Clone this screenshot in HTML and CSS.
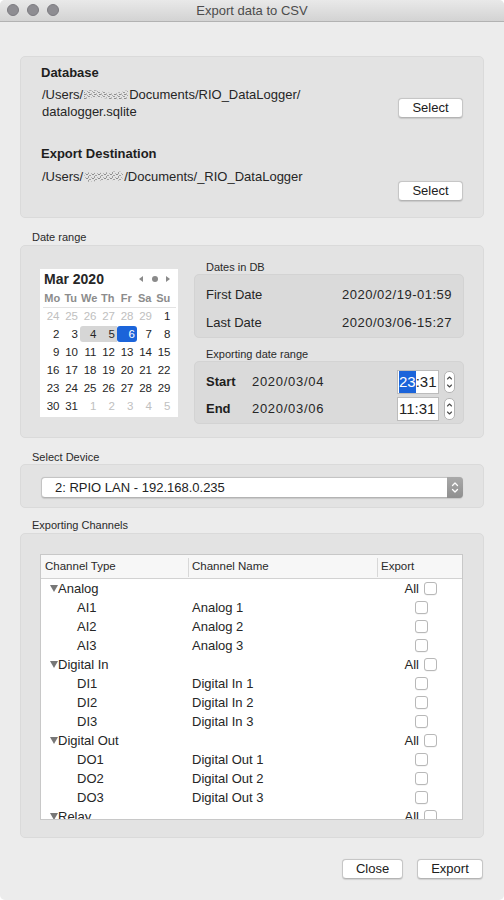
FILE: index.html
```html
<!DOCTYPE html>
<html lang="en">
<head>
<meta charset="utf-8">
<title>Export data to CSV</title>
<link rel="stylesheet" href="styles.css">
</head>
<body>
<div class="window">
  <header class="titlebar">
    <div class="lights"><span></span><span></span><span></span></div>
    <div class="title">Export data to CSV</div>
    <div class="lights-spacer"></div>
  </header>

  <main class="content">
    <section class="group db">
      <div class="field-title">Database</div>
      <div class="path-row">
        <div class="path">/Users/<svg class="mask" width="46" height="13" viewBox="0 0 46 13"><defs><pattern id="nz1" width="5" height="4" patternUnits="userSpaceOnUse"><rect x="0" y="0" width="2" height="1" fill="#9a9a9a"/><rect x="3" y="1" width="1" height="2" fill="#b8b8b8"/><rect x="1" y="2" width="2" height="1" fill="#8e8e8e"/><rect x="4" y="3" width="1" height="1" fill="#a8a8a8"/></pattern></defs><path d="M1 3 Q12 1 22 4 T45 2 L45 11 Q30 12 20 10 T1 12Z" fill="url(#nz1)"/></svg>Documents/RIO_DataLogger/<br>datalogger.sqlite</div>
        <button class="btn btn-select">Select</button>
      </div>
      <div class="field-title second">Export Destination</div>
      <div class="path-row second">
        <div class="path">/Users/<svg class="mask" width="41" height="13" viewBox="0 0 41 13"><defs><pattern id="nz2" width="6" height="4" patternUnits="userSpaceOnUse"><rect x="0" y="1" width="2" height="1" fill="#a0a0a0"/><rect x="3" y="0" width="2" height="1" fill="#8c8c8c"/><rect x="2" y="3" width="1" height="1" fill="#b4b4b4"/><rect x="5" y="2" width="1" height="2" fill="#9c9c9c"/></pattern></defs><path d="M1 2 Q14 4 26 2 T40 3 L39 11 Q25 9 14 11 T2 10Z" fill="url(#nz2)"/></svg>/Documents/_RIO_DataLogger</div>
        <button class="btn btn-select low">Select</button>
      </div>
    </section>

    <div class="group-label first">Date range</div>
    <section class="group range">
      <div class="cal">
        <div class="cal-head">
          <span class="month">Mar 2020</span>
          <span class="cal-nav"><i class="tri-left"></i><i class="dot"></i><i class="tri-right"></i></span>
        </div>
        <div class="dow"><span>Mo</span><span>Tu</span><span>We</span><span>Th</span><span>Fr</span><span>Sa</span><span>Su</span></div>
        <div class="days">
          <span class="out">24</span><span class="out">25</span><span class="out">26</span><span class="out">27</span><span class="out">28</span><span class="out">29</span><span>1</span>
          <span>2</span><span>3</span><span class="in-range start">4</span><span class="in-range">5</span><span class="sel">6</span><span>7</span><span>8</span>
          <span>9</span><span>10</span><span>11</span><span>12</span><span>13</span><span>14</span><span>15</span>
          <span>16</span><span>17</span><span>18</span><span>19</span><span>20</span><span>21</span><span>22</span>
          <span>23</span><span>24</span><span>25</span><span>26</span><span>27</span><span>28</span><span>29</span>
          <span>30</span><span>31</span><span class="out">1</span><span class="out">2</span><span class="out">3</span><span class="out">4</span><span class="out">5</span>
        </div>
      </div>

      <div class="rcol">
        <div class="sub-label">Dates in DB</div>
        <div class="inner db-dates">
          <div class="kv"><span>First Date</span><span class="num">2020/02/19-01:59</span></div>
          <div class="kv"><span>Last Date</span><span class="num">2020/03/06-15:27</span></div>
        </div>
        <div class="sub-label gap">Exporting date range</div>
        <div class="inner export-range">
          <div class="er-row">
            <span class="er-label">Start</span>
            <span class="er-date">2020/03/04</span>
            <span class="time"><span class="hl">23</span>:31</span>
            <span class="stepper"><svg width="9" height="20" viewBox="0 0 9 20"><path d="M2.5 7 L4.5 5 L6.5 7" fill="none" stroke="#4a4a4a" stroke-width="1.1" stroke-linecap="round" stroke-linejoin="round"/><path d="M2.5 13 L4.5 15 L6.5 13" fill="none" stroke="#4a4a4a" stroke-width="1.1" stroke-linecap="round" stroke-linejoin="round"/></svg></span>
          </div>
          <div class="er-row">
            <span class="er-label">End</span>
            <span class="er-date">2020/03/06</span>
            <span class="time">11:31</span>
            <span class="stepper"><svg width="9" height="20" viewBox="0 0 9 20"><path d="M2.5 7 L4.5 5 L6.5 7" fill="none" stroke="#4a4a4a" stroke-width="1.1" stroke-linecap="round" stroke-linejoin="round"/><path d="M2.5 13 L4.5 15 L6.5 13" fill="none" stroke="#4a4a4a" stroke-width="1.1" stroke-linecap="round" stroke-linejoin="round"/></svg></span>
          </div>
        </div>
      </div>
    </section>

    <div class="group-label dev">Select Device</div>
    <section class="group device">
      <div class="popup">
        <span class="popup-text">2: RPIO LAN - 192.168.0.235</span>
        <span class="popup-arrows"><svg width="14" height="19" viewBox="0 0 14 19"><path d="M4.5 7.5 L7 5 L9.5 7.5" fill="none" stroke="#fff" stroke-width="1.3" stroke-linecap="round" stroke-linejoin="round"/><path d="M4.5 11.5 L7 14 L9.5 11.5" fill="none" stroke="#fff" stroke-width="1.3" stroke-linecap="round" stroke-linejoin="round"/></svg></span>
      </div>
    </section>

    <div class="group-label ch">Exporting Channels</div>
    <section class="group channels">
      <div class="tbl">
        <div class="thead">
          <div class="th">Channel Type</div>
          <div class="th div">Channel Name</div>
          <div class="th div">Export</div>
        </div>
        <div class="tbody">
          <div class="tr cat"><div class="td t1"><i class="disc"></i>Analog</div><div class="td"></div><div class="td t3">All<span class="cb"></span></div></div>
          <div class="tr"><div class="td t1">AI1</div><div class="td t2">Analog 1</div><div class="td t3"><span class="cb"></span></div></div>
          <div class="tr"><div class="td t1">AI2</div><div class="td t2">Analog 2</div><div class="td t3"><span class="cb"></span></div></div>
          <div class="tr"><div class="td t1">AI3</div><div class="td t2">Analog 3</div><div class="td t3"><span class="cb"></span></div></div>
          <div class="tr cat"><div class="td t1"><i class="disc"></i>Digital In</div><div class="td"></div><div class="td t3">All<span class="cb"></span></div></div>
          <div class="tr"><div class="td t1">DI1</div><div class="td t2">Digital In 1</div><div class="td t3"><span class="cb"></span></div></div>
          <div class="tr"><div class="td t1">DI2</div><div class="td t2">Digital In 2</div><div class="td t3"><span class="cb"></span></div></div>
          <div class="tr"><div class="td t1">DI3</div><div class="td t2">Digital In 3</div><div class="td t3"><span class="cb"></span></div></div>
          <div class="tr cat"><div class="td t1"><i class="disc"></i>Digital Out</div><div class="td"></div><div class="td t3">All<span class="cb"></span></div></div>
          <div class="tr"><div class="td t1">DO1</div><div class="td t2">Digital Out 1</div><div class="td t3"><span class="cb"></span></div></div>
          <div class="tr"><div class="td t1">DO2</div><div class="td t2">Digital Out 2</div><div class="td t3"><span class="cb"></span></div></div>
          <div class="tr"><div class="td t1">DO3</div><div class="td t2">Digital Out 3</div><div class="td t3"><span class="cb"></span></div></div>
          <div class="tr cat"><div class="td t1"><i class="disc"></i>Relay</div><div class="td"></div><div class="td t3">All<span class="cb"></span></div></div>
        </div>
      </div>
    </section>
  </main>

  <footer class="footer">
    <button class="btn btn-close">Close</button>
    <button class="btn btn-export">Export</button>
  </footer>
</div>
</body>
</html>
```

FILE: styles.css
```css
* { box-sizing: border-box; }

html, body {
  margin: 0;
  background: #ffffff;
}

body {
  font-family: "Liberation Sans", Arial, sans-serif;
  font-size: 13px;
  color: #262626;
}

.window {
  width: 504px;
  height: 900px;
  background: #ececec;
  border-radius: 5px;
  overflow: hidden;
  display: flex;
  flex-direction: column;
}

/* ---------- title bar ---------- */
.titlebar {
  flex: none;
  height: 22px;
  display: flex;
  align-items: center;
  background: linear-gradient(#e9e9e9, #d3d3d3);
  border-bottom: 1px solid #b2b2b2;
}

.lights {
  width: 70px;
  display: flex;
  gap: 8px;
  padding-left: 7px;
  margin-top: -1px;
}

.lights span {
  width: 12px;
  height: 12px;
  border-radius: 50%;
  background: #8e8d92;
  border: 1px solid #7c7b80;
}

.lights-spacer { width: 70px; }

.title {
  flex: 1;
  text-align: center;
  font-size: 13px;
  color: #4c4c4c;
  margin-top: -1px;
}

/* ---------- content ---------- */
.content {
  padding: 34px 20px 0;
}

.group {
  background: #e3e3e3;
  border: 1px solid #dadada;
  border-radius: 5px;
}

.group-label {
  font-size: 11px;
  line-height: 14px;
  color: #2a2a2a;
  padding-left: 12px;
}
.group-label.first { margin: 12px 0 1px; }
.group-label.dev { margin: 12px 0 0; }
.group-label.ch { margin: 10px 0 1px; }

/* database box */
.db {
  padding: 8px 20px 16px 20px;
}

.field-title {
  font-weight: bold;
  font-size: 13px;
  line-height: 16px;
  color: #1e1e1e;
}
.field-title.second { margin-top: 26px; }

.path-row {
  display: flex;
  justify-content: space-between;
  align-items: flex-start;
  margin-top: 5px;
}
.path-row.second { margin-top: 6px; }

.path {
  line-height: 17px;
  color: #262626;
  padding-left: 1px;
}

.mask {
  vertical-align: -2px;
}

.btn {
  font-family: "Liberation Sans", Arial, sans-serif;
  font-size: 13px;
  color: #202020;
  background: #ffffff;
  border: 1px solid #c6c6c6;
  border-bottom-color: #b4b4b4;
  border-radius: 4px;
  height: 20px;
  padding: 0;
  line-height: 18px;
  box-shadow: 0 0.5px 1px rgba(0, 0, 0, 0.12);
}

.btn-select {
  width: 65px;
  margin-top: 12px;
}
.btn-select.low { margin-top: 13px; }

/* date range box */
.range {
  display: flex;
  align-items: flex-start;
  gap: 16px;
  padding: 14px 19px 13px 19px;
}

.cal {
  flex: none;
  width: 138px;
  height: 148px;
  margin-top: 9px;
  background: #ffffff;
  padding: 0 2px 0 3px;
}

.cal-head {
  height: 20px;
  display: flex;
  align-items: center;
  justify-content: space-between;
  padding-left: 1px;
}

.month {
  font-weight: bold;
  font-size: 14px;
  color: #262626;
}

.cal-nav {
  display: flex;
  align-items: center;
  padding-right: 6px;
}

.tri-left {
  width: 0;
  height: 0;
  border-top: 3px solid transparent;
  border-bottom: 3px solid transparent;
  border-right: 4px solid #8a8a8a;
}

.tri-right {
  width: 0;
  height: 0;
  border-top: 3px solid transparent;
  border-bottom: 3px solid transparent;
  border-left: 4px solid #8a8a8a;
}

.dot {
  width: 6px;
  height: 6px;
  border-radius: 50%;
  background: #8a8a8a;
  margin: 0 8px 0 9px;
}

.dow {
  display: grid;
  grid-template-columns: repeat(7, 18.5px);
  height: 19px;
  align-items: center;
  border-bottom: 1px solid #e3e3e3;
  font-size: 11px;
  font-weight: bold;
  color: #8c8c8c;
  text-align: center;
}

.days {
  display: grid;
  grid-template-columns: repeat(7, 18.5px);
  grid-auto-rows: 16px;
  row-gap: 2px;
  font-size: 11.5px;
  line-height: 16px;
  color: #262626;
}

.days span {
  text-align: right;
  padding-right: 2px;
}

.days .out { color: #c0c0c0; }

.days .in-range { background: #d6d6d6; }
.days .in-range.start { border-radius: 3px 0 0 3px; }

.days .sel {
  background: #1b64da;
  color: #ffffff;
  border-radius: 3px;
  margin-right: -1.5px;
}

.rcol {
  width: 270px;
}

.sub-label {
  font-size: 11px;
  line-height: 14px;
  color: #2a2a2a;
  padding-left: 12px;
}
.sub-label.gap { margin-top: 9px; }

.inner {
  background: #dadada;
  border: 1px solid #d3d3d3;
  border-radius: 5px;
}

.db-dates {
  padding: 5px 11px 1px 11px;
}

.kv {
  height: 28px;
  display: flex;
  align-items: center;
  justify-content: space-between;
  font-size: 13px;
  color: #262626;
}

.num { letter-spacing: 0.5px; }

.export-range {
  padding: 6px 8px 1px 11px;
}

.er-row {
  height: 27px;
  display: flex;
  align-items: center;
}

.er-label {
  width: 46px;
  font-weight: bold;
  color: #1e1e1e;
}

.er-date {
  letter-spacing: 0.7px;
}

.time {
  margin-left: auto;
  width: 42px;
  height: 24px;
  background: #ffffff;
  border: 1px solid #bcbcbc;
  font-size: 15px;
  line-height: 22px;
  padding-left: 1px;
  color: #222;
}

.time .hl {
  display: inline-block;
  background: #1b64da;
  color: #ffffff;
}

.stepper {
  margin-left: 5px;
  width: 11px;
  height: 22px;
  background: #ffffff;
  border: 1px solid #b4b4b4;
  border-radius: 5px;
  display: flex;
  align-items: center;
  justify-content: center;
}

/* device box */
.device {
  padding: 12px 20px 9px 20px;
}

.popup {
  height: 21px;
  display: flex;
  background: #ffffff;
  border: 1px solid #c4c4c4;
  border-bottom-color: #b3b3b3;
  border-radius: 4px;
  box-shadow: 0 0.5px 1px rgba(0, 0, 0, 0.12);
}

.popup-text {
  flex: 1;
  padding-left: 13px;
  line-height: 19px;
  color: #222;
}

.popup-arrows {
  width: 16px;
  margin: -1px -1px -1px 0;
  background: linear-gradient(#a9a9a9, #8f8f8f);
  border-radius: 0 4px 4px 0;
  display: flex;
  align-items: center;
  justify-content: center;
}

/* channels box */
.channels {
  padding: 20px 20px 17px 19px;
}

.tbl {
  background: #ffffff;
  border: 1px solid #c8c8c8;
  height: 266px;
  overflow: hidden;
}

.thead {
  display: grid;
  grid-template-columns: 147px 189px 1fr;
  height: 24px;
  background: #f7f7f7;
  border-bottom: 1px solid #d2d2d2;
}

.th {
  font-size: 11.5px;
  line-height: 23px;
  padding-left: 4px;
  color: #2a2a2a;
}

.th.div {
  background: linear-gradient(#d8d8d8, #d8d8d8) no-repeat 0 3px / 1px 19px;
}

.tbody {
  height: 240px;
  overflow: hidden;
}

.tr {
  display: grid;
  grid-template-columns: 147px 189px 1fr;
  height: 19px;
  line-height: 19px;
  font-size: 13px;
  color: #262626;
}

.td.t1 { padding-left: 36px; }
.td.t2 { padding-left: 4px; }

.td.t3 {
  display: flex;
  align-items: center;
  justify-content: center;
  padding-left: 4px;
}

.cat .td.t1 {
  padding-left: 9px;
  white-space: nowrap;
}

.cat .td.t3 {
  justify-content: flex-end;
  gap: 5px;
  padding-right: 25px;
}

.disc {
  display: inline-block;
  width: 0;
  height: 0;
  border-left: 4px solid transparent;
  border-right: 4px solid transparent;
  border-top: 7px solid #777777;
  margin-right: 0;
  vertical-align: 1px;
}

.cb {
  width: 13px;
  height: 13px;
  background: #ffffff;
  border: 1px solid #b8b8b8;
  border-radius: 3px;
  box-shadow: 0 0.5px 0.5px rgba(0, 0, 0, 0.08);
}

/* buttons along the bottom */
.footer {
  display: flex;
  justify-content: flex-end;
  gap: 14px;
  padding: 21px 21px 0 0;
}

.btn-close { width: 61px; }
.btn-export { width: 66px; }
```
